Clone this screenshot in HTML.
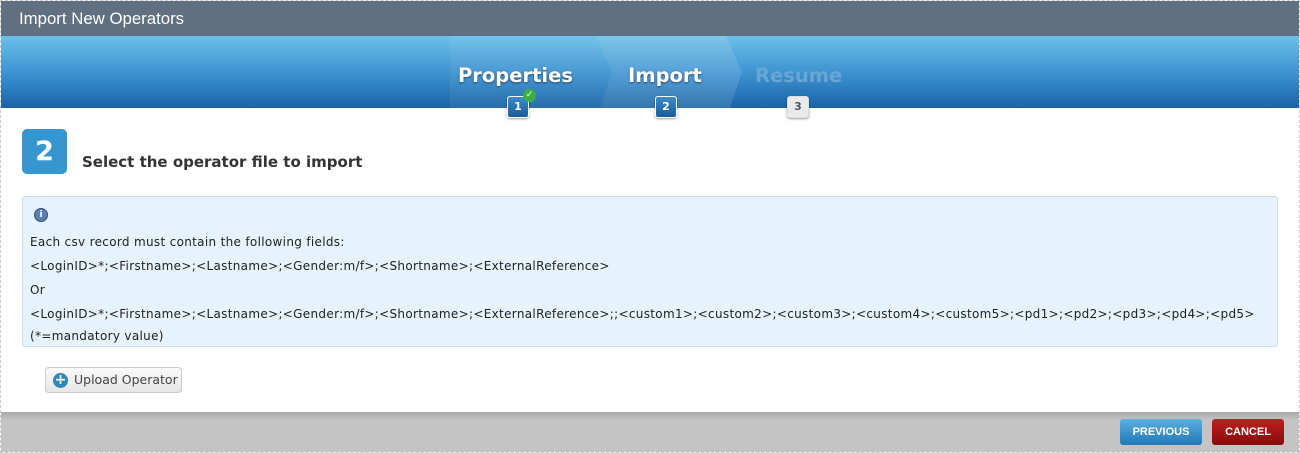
<!DOCTYPE html>
<html><head><style>
*{margin:0;padding:0;box-sizing:border-box}
body{width:1300px;height:453px;background:#fff;font-family:"DejaVu Sans","Liberation Sans",sans-serif;position:relative;overflow:hidden}
.frame{position:absolute;left:0;top:0;width:1300px;height:453px;border:1px dashed #ccc}
.title{position:absolute;left:1px;top:1px;width:1298px;height:35px;background:#607080;color:#fff;font-size:16.8px;line-height:35px;padding-left:18px;font-family:"Liberation Sans",sans-serif}
.banner{position:absolute;left:1px;top:36px;width:1298px;height:72px;background:linear-gradient(#6cc0e8,#3a8fcf 55%,#1a64a6)}
.step{position:absolute;top:64px;font-weight:bold;font-size:19.5px;color:#fff;text-shadow:0 1px 2px rgba(0,0,0,.5)}
.badge{position:absolute;top:96px;width:22px;height:22px;border-radius:3px;background:linear-gradient(#3a8ccc,#1b5c98);border:1px solid #fff;color:#fff;font-size:11px;font-weight:bold;text-align:center;line-height:20px;box-shadow:0 1px 2px rgba(0,0,0,.4)}
.num{position:absolute;left:22px;top:129px;width:45px;height:45px;border-radius:5px;background:#3596d0;color:#fff;font-size:27px;font-weight:bold;text-align:center;line-height:45px}
.h{position:absolute;left:82px;top:153px;font-size:15px;font-weight:bold;color:#333}
.info{position:absolute;left:22px;top:196px;width:1256px;height:151px;background:#e6f2fc;border:1px solid #c6def0;border-radius:3px;font-size:12px;letter-spacing:0.32px;color:#222}
.info div{position:absolute;left:7px;white-space:nowrap}
.up{position:absolute;left:45px;top:367px;width:137px;height:26px;border:1px solid #ccc;border-radius:4px;background:linear-gradient(#fafafa,#e6e6e6);font-size:12.5px;color:#444;line-height:24px;padding-left:28px}
.up i{position:absolute;left:7px;top:5px;width:15px;height:15px;border-radius:50%;background:#2f86b8;color:#fff;font-style:normal;font-weight:bold;font-size:14px;line-height:14px;text-align:center}
.foot{position:absolute;left:1px;top:412px;width:1298px;height:40px;background:linear-gradient(#a8a8a8,#c4c4c4 20%,#c4c4c4)}
.btn{position:absolute;top:419px;height:26px;border-radius:3px;color:#fff;font-size:11px;font-weight:bold;text-align:center;line-height:26px;font-family:"Liberation Sans",sans-serif}
</style></head><body>
<div class="frame"></div>
<div class="title">Import New Operators</div>
<div class="banner"></div>
<svg style="position:absolute;left:0;top:36px" width="1300" height="72">
<path d="M596 0 L612 36 L600 72 L730 72 L742 36 L726 0 Z" fill="rgba(255,255,255,0.12)"/>
<path d="M450 0 L596 0 L612 36 L600 72 L450 72 Z" fill="rgba(255,255,255,0.06)"/>
</svg>
<div class="step" style="left:458px">Properties</div>
<div class="step" style="left:628px">Import</div>
<div class="step" style="left:755px;color:#6aa6d2;text-shadow:none">Resume</div>
<div class="badge" style="left:507px">1</div>
<div style="position:absolute;left:523px;top:89px;width:13px;height:13px;border-radius:50%;background:#3cb043;color:#fff;font-size:9px;line-height:13px;text-align:center;font-weight:bold">✓</div>
<div class="badge" style="left:655px">2</div>
<div class="badge" style="left:787px;background:#e8eaec;color:#555;border-color:#ddd">3</div>
<div class="num">2</div>
<div class="h">Select the operator file to import</div>
<div class="info">
<div style="top:11px;left:11px;width:14px;height:14px;border-radius:50%;background:#5a7fb0;border:1px solid #34527a;color:#fff;font-size:9px;line-height:12px;text-align:center;font-weight:bold;letter-spacing:0">i</div>
<div style="top:38px">Each csv record must contain the following fields:</div>
<div style="top:62px">&lt;LoginID&gt;*;&lt;Firstname&gt;;&lt;Lastname&gt;;&lt;Gender:m/f&gt;;&lt;Shortname&gt;;&lt;ExternalReference&gt;</div>
<div style="top:86px">Or</div>
<div style="top:110px">&lt;LoginID&gt;*;&lt;Firstname&gt;;&lt;Lastname&gt;;&lt;Gender:m/f&gt;;&lt;Shortname&gt;;&lt;ExternalReference&gt;;;&lt;custom1&gt;;&lt;custom2&gt;;&lt;custom3&gt;;&lt;custom4&gt;;&lt;custom5&gt;;&lt;pd1&gt;;&lt;pd2&gt;;&lt;pd3&gt;;&lt;pd4&gt;;&lt;pd5&gt;</div>
<div style="top:132px">(*=mandatory value)</div>
</div>
<div class="up"><i>+</i>Upload Operator</div>
<div class="foot"></div>
<div class="btn" style="left:1120px;width:82px;background:linear-gradient(#5ab0e0,#2477b5)">PREVIOUS</div>
<div class="btn" style="left:1212px;width:72px;background:linear-gradient(#c02020,#860a0a)">CANCEL</div>
</body></html>
